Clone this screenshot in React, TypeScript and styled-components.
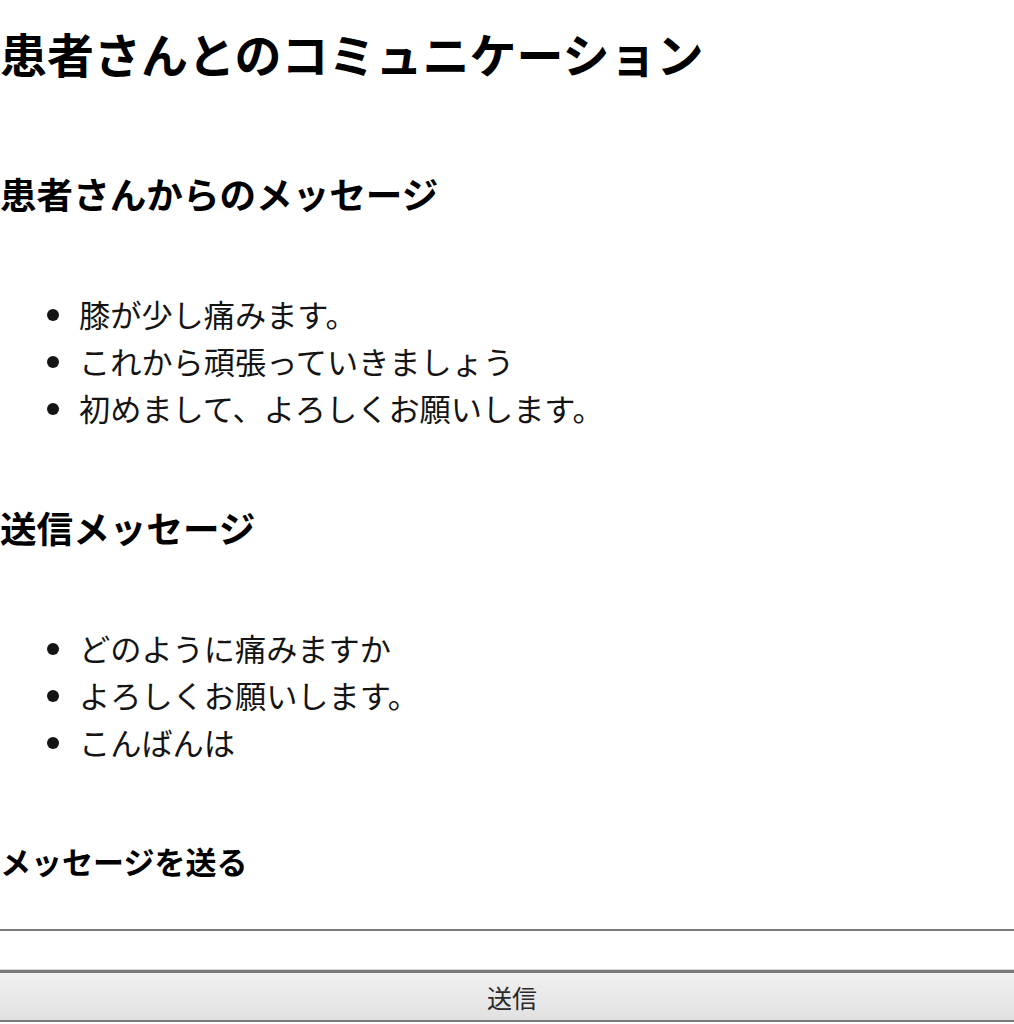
import styled, { createGlobalStyle } from "styled-components";

const GlobalStyle = createGlobalStyle`
  html, body {
    margin: 0;
    padding: 0;
    background: #ffffff;
  }
  body {
    font-family: "Noto Sans CJK JP", "Noto Sans", sans-serif;
    color: #000000;
  }
`;

const patientMessages = [
  "膝が少し痛みます。",
  "これから頑張っていきましょう",
  "初めまして、よろしくお願いします。",
];

const sentMessages = ["どのように痛みますか", "よろしくお願いします。", "こんばんは"];

const Page = styled.div`
  display: flex;
  flex-direction: column;
  width: 100%;
  height: 1024px;
  overflow: hidden;
  padding-top: 18px;
  box-sizing: border-box;
`;

const Title = styled.h1`
  margin: 0;
  font-size: 47px;
  line-height: 69px;
  font-weight: 700;
  white-space: nowrap;
`;

const SectionTitle = styled.h2<{ gap: number }>`
  margin: ${(props) => props.gap}px 0 0;
  font-size: 36.6px;
  line-height: 54px;
  font-weight: 700;
  white-space: nowrap;
`;

const FormTitle = styled.h3`
  margin: 72px 0 0;
  font-size: 31px;
  line-height: 47px;
  font-weight: 700;
`;

const MessageList = styled.ul`
  margin: 69px 0 0;
  padding-left: 78px;
  list-style: disc;
`;

const MessageItem = styled.li`
  font-size: 31.2px;
  line-height: 47px;
  color: #141414;
  padding-left: 1px;
`;

const MessageForm = styled.form`
  display: flex;
  flex-direction: column;
  margin-top: 45px;
`;

const MessageInput = styled.input`
  width: 100%;
  height: 41px;
  box-sizing: border-box;
  margin: 0;
  border: none;
  border-top: 2px solid #7b7b7b;
  border-bottom: 1px solid #d4d4d4;
  background: #ffffff;
  font-family: inherit;
  font-size: 25px;
  outline: none;
`;

const SendButton = styled.button`
  width: 100%;
  height: 52px;
  box-sizing: border-box;
  margin: 0;
  border: none;
  border-top: 3px solid #7a7a7a;
  border-bottom: 2px solid #7a7a7a;
  background: linear-gradient(#f0f0f0, #e1e1e1);
  font-family: inherit;
  font-size: 25px;
  color: #2a2a2a;
  padding: 0 0 0 10px;
`;

const App = () => {
  return (
    <>
      <GlobalStyle />
      <Page>
        <Title>患者さんとのコミュニケーション</Title>

        <SectionTitle gap={80}>患者さんからのメッセージ</SectionTitle>
        <MessageList>
          {patientMessages.map((text) => (
            <MessageItem key={text}>{text}</MessageItem>
          ))}
        </MessageList>

        <SectionTitle gap={70}>送信メッセージ</SectionTitle>
        <MessageList>
          {sentMessages.map((text) => (
            <MessageItem key={text}>{text}</MessageItem>
          ))}
        </MessageList>

        <FormTitle>メッセージを送る</FormTitle>
        <MessageForm onSubmit={(e) => e.preventDefault()}>
          <MessageInput type="text" />
          <SendButton type="submit">送信</SendButton>
        </MessageForm>
      </Page>
    </>
  );
};

export default App;
